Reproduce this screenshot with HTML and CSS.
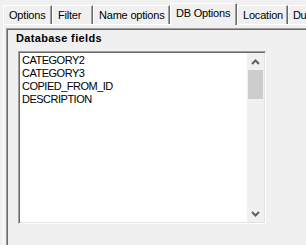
FILE: index.html
```html
<!DOCTYPE html>
<html>
<head>
<meta charset="utf-8">
<link rel="stylesheet" href="styles.css">
</head>
<body>
<div class="window">
  <div class="tabs">
    <div class="tab w-options">Options</div>
    <div class="tab w-filter">Filter</div>
    <div class="tab w-name">Name options</div>
    <div class="tab active w-db">DB Options</div>
    <div class="tab w-loc">Location</div>
    <div class="tab w-du">Du</div>
  </div>
  <div class="panel">
    <div class="box">
      <div class="label">Database fields</div>
      <div class="listbox">
        <ul class="items">
          <li>CATEGORY2</li>
          <li>CATEGORY3</li>
          <li>COPIED_FROM_ID</li>
          <li>DESCRIPTION</li>
        </ul>
        <div class="scrollbar">
          <div class="sb-btn">
            <svg width="9" height="6" viewBox="0 0 9 6"><path d="M1 5 L4.5 1.5 L8 5" fill="none" stroke="#606060" stroke-width="2"/></svg>
          </div>
          <div class="sb-thumb"></div>
          <div class="sb-track"></div>
          <div class="sb-btn">
            <svg width="9" height="6" viewBox="0 0 9 6"><path d="M1 1 L4.5 4.5 L8 1" fill="none" stroke="#606060" stroke-width="2"/></svg>
          </div>
        </div>
      </div>
    </div>
  </div>
</div>
</body>
</html>
```

FILE: styles.css
```css
html, body {
  margin: 0;
  padding: 0;
  background: #f0f0f0;
}
body {
  width: 306px;
  height: 245px;
  overflow: hidden;
  font-family: "Liberation Sans", Arial, sans-serif;
  font-size: 11px;
  color: #000;
}
.window {
  width: 306px;
  height: 245px;
  display: flex;
  flex-direction: column;
}
.tabs {
  display: flex;
  align-items: flex-end;
  height: 24px;
  padding-left: 3px;
  flex: none;
  white-space: nowrap;
}
.tab {
  box-sizing: border-box;
  height: 19px;
  flex: none;
  border-top: 1px solid #fff;
  border-left: 1px solid #fff;
  border-right: 1px solid #696969;
  box-shadow: inset -1px 0 0 #a0a0a0;
  padding: 3px 0 0 5px;
  line-height: 13px;
  letter-spacing: -0.2px;
  overflow: hidden;
}
.tab.active {
  height: 22px;
  margin-bottom: -1px;
  position: relative;
  z-index: 1;
  background: #f0f0f0;
}
.w-options { width: 49px; }
.w-filter { width: 41px; }
.w-name { width: 77px; }
.w-db { width: 67px; }
.w-loc { width: 51px; }
.w-du { width: 40px; padding-left: 4px; letter-spacing: -0.5px; }
.panel {
  flex: 1;
  margin-left: 3px;
  border-top: 1px solid #fff;
  border-left: 1px solid #fff;
  padding: 3px 0 0 2px;
  display: flex;
}
.box {
  flex: 1;
  border-top: 1px solid #a0a0a0;
  border-left: 1px solid #a0a0a0;
  box-shadow: inset 1px 1px 0 #696969;
  padding: 2px 0 0 11px;
}
.label {
  font-weight: bold;
  line-height: 13px;
  margin: 1px 0 0 -2px;
  letter-spacing: 0.35px;
}
.listbox {
  box-sizing: border-box;
  width: 248px;
  height: 173px;
  margin-top: 6px;
  background: #fff;
  border-top: 1px solid #a0a0a0;
  border-left: 1px solid #a0a0a0;
  border-right: 1px solid #fff;
  border-bottom: 1px solid #fff;
  box-shadow: inset 1px 1px 0 #696969, inset -1px -1px 0 #e3e3e3;
  padding: 1px;
  display: flex;
}
.items {
  flex: 1;
  list-style: none;
  margin: 0;
  padding: 1px 0 0 2px;
  line-height: 13px;
  letter-spacing: -0.5px;
}
.scrollbar {
  width: 17px;
  flex: none;
  background: #f0f0f0;
  display: flex;
  flex-direction: column;
}
.sb-btn {
  height: 17px;
  flex: none;
  display: flex;
  align-items: center;
  justify-content: center;
}
.sb-thumb {
  height: 29px;
  flex: none;
  margin: 0 1px;
  background: #cdcdcd;
}
.sb-track {
  flex: 1;
}
```
